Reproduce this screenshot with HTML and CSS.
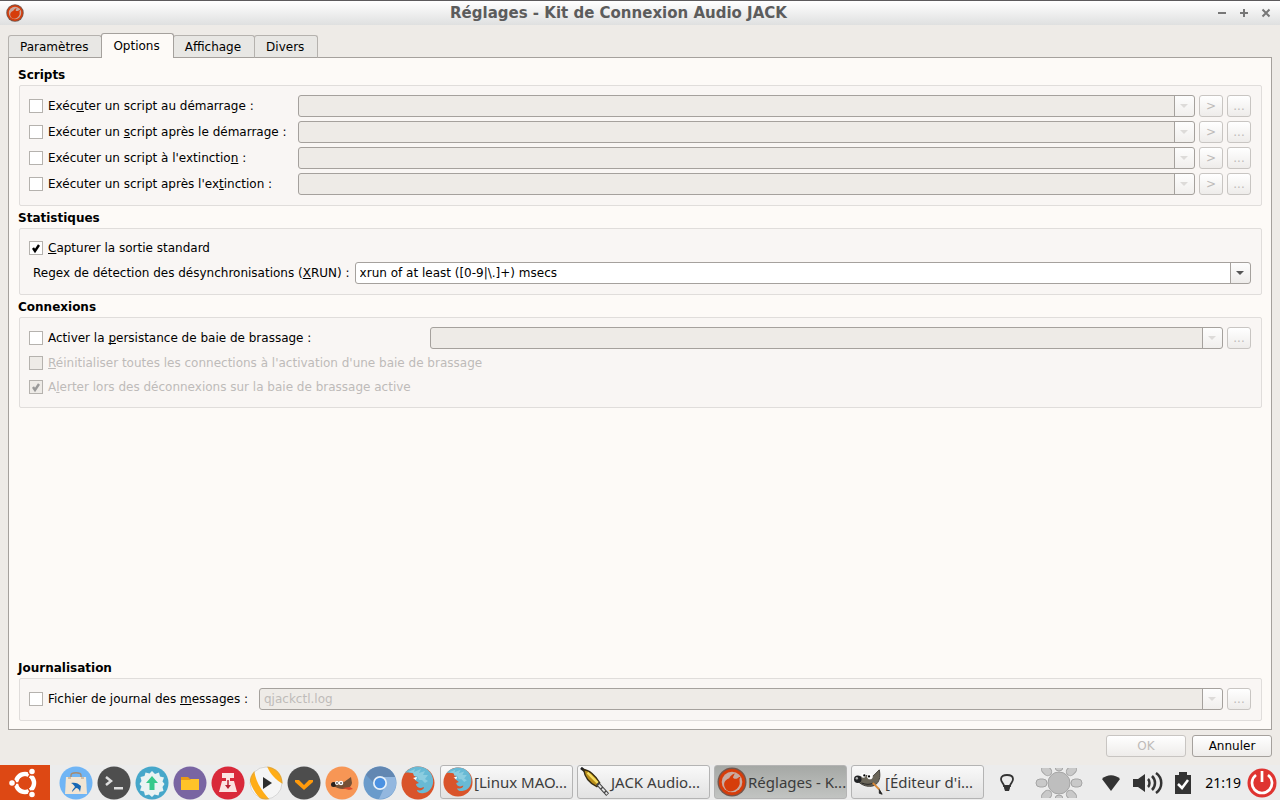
FILE: index.html
```html
<!DOCTYPE html>
<html lang="fr">

<head>
  <meta charset="UTF-8">
  <title>Réglages - Kit de Connexion Audio JACK</title>
  <link rel="stylesheet" href="styles.css">
</head>

<body>
  <!-- icônes partagées -->
  <svg class="defs" width="0" height="0">
    <defs>
      <clipPath id="disc"><circle cx="17" cy="17" r="16.500"/></clipPath>
      <symbol id="jack" viewBox="0 0 32 32">
        <circle cx="16" cy="16" r="15.500" fill="#75564c"/>
        <circle cx="16" cy="16" r="14" fill="#d63d0b"/>
        <circle cx="16" cy="16" r="11" fill="#c9aaa0"/>
        <path d="M9 23c-3-5-1-9 4-11 1-2 3-4 6-5l-2 4c1 2 3 2 5 1 1-1 2-2 3-1-2 2 0 5-1 8-2 5-6 7-10 7-2 0-4-1-5-3z" fill="#d63d0b"/>
      </symbol>
      <symbol id="firefox" viewBox="0 0 34 34">
        <circle cx="17" cy="17" r="16.500" fill="#d9542b"/>
        <path d="M4 7C7 3 12 .5 17 .5 25 .5 31 6 32 13c1 7-3 13-9 14-4 1-7-1-7-3 3 1 7 0 7-3l-3 1c-3 0-5-2-5-4l3-1-4-3c-1-2 0-4 2-5-3-2-8-3-12-2z" fill="#68bad5"/>
        <path d="M7 6l7-3-1 3 7-3-2 4 6-2-2 4 5 0-3 4 3 2-3 2-3-3-3 0-2-4-3 0-1-3z" fill="#8ccde0"/>
        <path d="M12 12l4-1-1 3z" fill="#fff"/>
      </symbol>
    </defs>
  </svg>

  <header class="titlebar">
    <svg class="app-icon" viewBox="0 0 32 32"><use href="#jack"/></svg>
    <h1>Réglages - Kit de Connexion Audio JACK</h1>
    <div class="win-buttons">
      <button type="button" aria-label="Réduire"><svg viewBox="0 0 10 10"><path d="M1 5h8"/></svg></button>
      <button type="button" aria-label="Agrandir"><svg viewBox="0 0 10 10"><path d="M1 5h8M5 1v8"/></svg></button>
      <button type="button" aria-label="Fermer"><svg viewBox="0 0 10 10"><path d="M1.500 1.500l7 7M8.500 1.500l-7 7"/></svg></button>
    </div>
  </header>

  <main class="window">
    <div class="tabs" role="tablist">
      <button type="button" role="tab">Paramètres</button>
      <button type="button" role="tab" class="active" aria-selected="true">Options</button>
      <button type="button" role="tab">Affichage</button>
      <button type="button" role="tab">Divers</button>
    </div>

    <form class="pane" id="options">
      <section>
        <h2>Scripts</h2>
        <div class="group scripts">
          <div class="row">
            <label class="check"><input type="checkbox"><span>Exéc<u>u</u>ter un script au démarrage :</span></label>
            <select class="combo" aria-label="Script au démarrage" disabled><option></option></select>
            <button type="button" class="tool" disabled>&gt;</button>
            <button type="button" class="tool" disabled>...</button>
          </div>
          <div class="row">
            <label class="check"><input type="checkbox"><span>Exécuter un <u>s</u>cript après le démarrage :</span></label>
            <select class="combo" aria-label="Script après le démarrage" disabled><option></option></select>
            <button type="button" class="tool" disabled>&gt;</button>
            <button type="button" class="tool" disabled>...</button>
          </div>
          <div class="row">
            <label class="check"><input type="checkbox"><span>Exécuter un script à l'extinctio<u>n</u> :</span></label>
            <select class="combo" aria-label="Script à l'extinction" disabled><option></option></select>
            <button type="button" class="tool" disabled>&gt;</button>
            <button type="button" class="tool" disabled>...</button>
          </div>
          <div class="row">
            <label class="check"><input type="checkbox"><span>Exécuter un script après l'ex<u>t</u>inction :</span></label>
            <select class="combo" aria-label="Script après l'extinction" disabled><option></option></select>
            <button type="button" class="tool" disabled>&gt;</button>
            <button type="button" class="tool" disabled>...</button>
          </div>
        </div>
      </section>

      <section>
        <h2>Statistiques</h2>
        <div class="group stats">
          <label class="check"><input type="checkbox" checked><span><u>C</u>apturer la sortie standard</span></label>
          <div class="row">
            <label class="regex" for="xrun">Regex de détection des désynchronisations (<u>X</u>RUN) :</label>
            <select class="combo" id="xrun"><option>xrun of at least ([0-9|\.]+) msecs</option></select>
          </div>
        </div>
      </section>

      <section>
        <h2>Connexions</h2>
        <div class="group connections">
          <div class="row">
            <label class="check"><input type="checkbox"><span>Activer la <u>p</u>ersistance de baie de brassage :</span></label>
            <select class="combo" aria-label="Baie de brassage" disabled><option></option></select>
            <button type="button" class="tool" disabled>...</button>
          </div>
          <label class="check off"><input type="checkbox" disabled><span><u>R</u>éinitialiser toutes les connections à l'activation d'une baie de brassage</span></label>
          <label class="check off"><input type="checkbox" checked disabled><span>A<u>l</u>erter lors des déconnexions sur la baie de brassage active</span></label>
        </div>
      </section>

      <section class="bottom">
        <h2>Journalisation</h2>
        <div class="group log">
          <div class="row">
            <label class="check"><input type="checkbox"><span>Fichier de journal des <u>m</u>essages :</span></label>
            <select class="combo" aria-label="Fichier de journal" disabled><option>qjackctl.log</option></select>
            <button type="button" class="tool" disabled>...</button>
          </div>
        </div>
      </section>
    </form>

    <div class="actions">
      <button type="submit" form="options" disabled>OK</button>
      <button type="button">Annuler</button>
    </div>
  </main>

  <footer class="taskbar">
    <button type="button" class="start" aria-label="Menu">
      <svg viewBox="0 0 50 35">
        <circle cx="25" cy="18" r="9" fill="none" stroke="#fff" stroke-width="4.500"/>
        <path d="M25 18L10 18M25 18L32.500 5M25 18L32.500 31" stroke="#dd4814" stroke-width="1.500"/>
        <circle cx="25" cy="18" r="6.500" fill="#dd4814"/>
        <g fill="#fff" stroke="#dd4814" stroke-width="1.500">
          <circle cx="12" cy="18" r="3.500"/><circle cx="32" cy="6.500" r="3.500"/><circle cx="32" cy="29.500" r="3.500"/>
        </g>
      </svg>
    </button>

    <nav class="launchers">
      <button type="button" aria-label="Logiciels">
        <svg viewBox="0 0 34 34"><circle cx="17" cy="17" r="16.500" fill="#70b5f5"/>
          <path d="M12 13V9c0-3 10-3 10 0v4" fill="none" stroke="#a58a70" stroke-width="1.300"/>
          <path d="M7 11h20l1 17H6z" fill="#f1e5d4"/><path d="M9 11h3v2H9zM22 11h3v2h-3z" fill="#d1bda4"/>
          <path d="M12 17c4-1 7 0 10 3l-1 6c-1-3-2-4-4-4l-4 4c0-2 2-4 3-5-1-2-2-3-4-4z" fill="#1767b4"/></svg>
      </button>
      <button type="button" aria-label="Terminal">
        <svg viewBox="0 0 34 34"><circle cx="17" cy="17" r="16.500" fill="#4e4e4e"/>
          <path d="M9 11l5 4-5 4" fill="none" stroke="#dedede" stroke-width="2.500"/><path d="M17 21h9v2.500h-9z" fill="#dedede"/></svg>
      </button>
      <button type="button" aria-label="Mises à jour">
        <svg viewBox="0 0 34 34"><circle cx="17" cy="17" r="16.500" fill="#46a7ca"/>
          <path d="M17 5l3 3 4-1.500 1 4 4 1-1.500 4 2 2.500-2 3 1 4-4 1-1 3.500-4-1-2.500 2.500-3-2.500-4 1-1-4-4-1 1.500-4-2-2.500 2-3-1-4 4-1 1-3.500 4 1z" fill="#eaf3f3"/>
          <path d="M17 10l6 7h-3.500v7h-5v-7H11z" fill="#36c98b"/></svg>
      </button>
      <button type="button" aria-label="Fichiers">
        <svg viewBox="0 0 34 34"><circle cx="17" cy="17" r="16.500" fill="#7965a2"/>
          <path d="M8 11h7l2 2h9v5H8z" fill="#e99a16"/><path d="M8 14h9l1-1h8v11H8z" fill="#ffc328"/></svg>
      </button>
      <button type="button" aria-label="Installation">
        <svg viewBox="0 0 34 34"><circle cx="17" cy="17" r="16.500" fill="#d9293a"/>
          <path d="M11 7h12v5H11zM15 12h4v4h-4z" fill="#fbe3e1"/><path d="M11 15h12l3 11H8z" fill="#fbe3e1"/>
          <path d="M17 14v7" stroke="#b92032" stroke-width="1.500"/><path d="M14 19h6l-3 4z" fill="#b92032"/></svg>
      </button>
      <button type="button" aria-label="Lecteur">
        <svg viewBox="0 0 34 34"><g clip-path="url(#disc)"><path d="M0 0h34v34H0z" fill="#f5f5f5"/>
          <path d="M0 0h5c0 14 7 24 16 34H13C6 28 2 20 0 12z" fill="#ffad16"/>
          <path d="M0 18c3 6 7 11 13 16H0z" fill="#fafafa"/>
          <path d="M18 0h16v18C27 14 21 8 18 0z" fill="#ffad16"/></g>
          <circle cx="17" cy="17" r="16" fill="none" stroke="#999" stroke-opacity=".35"/>
          <path d="M14 11l9 6-9 6z" fill="#2d2d2d"/></svg>
      </button>
      <button type="button" aria-label="Plex">
        <svg viewBox="0 0 34 34"><circle cx="17" cy="17" r="16.500" fill="#4d4d4d"/>
          <path d="M8 14h4l5 5 5-5h4v2l-9 8-9-8z" fill="#ff9a0b"/></svg>
      </button>
      <button type="button" aria-label="GIMP">
        <svg viewBox="0 0 34 34"><circle cx="17" cy="17" r="16.500" fill="#f79655"/>
          <path d="M8 17l7-2 4 1 7-5 1 6c-1 4-4 6-9 6-4 0-7-2-10-3z" fill="#755035"/>
          <circle cx="8.500" cy="18.500" r="2.500" fill="#28211f"/><circle cx="12" cy="17" r="2" fill="#fff"/><circle cx="16" cy="17" r="2.300" fill="#fff"/>
          <circle cx="12" cy="17" r=".8"/><circle cx="16" cy="17" r=".8"/><path d="M17 22l8-1 3 2-4 1z" fill="#dc4a2b"/></svg>
      </button>
      <button type="button" aria-label="Chromium">
        <svg viewBox="0 0 34 34"><circle cx="17" cy="17" r="16.500" fill="#6a9bcb"/>
          <path d="M3 9C10-3 27-2 32 11H17c-4 0-6 3-6 6z" fill="#6287b2"/>
          <path d="M32 11c4 11-3 22-16 22l6-13c2-3 1-7-2-9z" fill="#93b7df"/>
          <circle cx="17" cy="17" r="7" fill="#e8f1fa"/><circle cx="17" cy="17" r="5.300" fill="#4b91e2"/></svg>
      </button>
      <button type="button" aria-label="Firefox"><svg viewBox="0 0 34 34"><use href="#firefox"/></svg></button>
    </nav>

    <div class="tasks">
      <button type="button">
        <svg viewBox="0 0 34 34"><use href="#firefox"/></svg><span>[Linux MAO...</span>
      </button>
      <button type="button">
        <svg viewBox="0 0 32 32"><path d="M1 1l8 6" stroke="#222" stroke-width="3"/>
          <path d="M4 3c5 0 12 5 17 14l-3 4C10 17 5 11 4 3z" fill="#b98d18" stroke="#352b13" stroke-width="1.500"/>
          <path d="M8 6l11 11" stroke="#f5dc61" stroke-width="2.500"/>
          <path d="M17 19l3-3 11 12-3 3z" fill="#464646"/><path d="M20 19l9 10" stroke="#e5e5e5" stroke-width="2" stroke-dasharray="4 1.500"/></svg>
        <span>JACK Audio...</span>
      </button>
      <button type="button" class="current">
        <svg viewBox="0 0 32 32"><use href="#jack"/></svg><span>Réglages - K...</span>
      </button>
      <button type="button">
        <svg viewBox="0 0 32 32"><path d="M5 11l9-2 6 1 7-7c1 6 1 11-3 15-3 3-8 3-12 2-3-1-5-2-7-4z" fill="#6b6659" stroke="#3d3a34"/>
          <circle cx="4" cy="13" r="4" fill="#202224"/><circle cx="3" cy="12" r="1.300" fill="#aaa"/>
          <circle cx="10" cy="9" r="2.500" fill="#fff"/><circle cx="17" cy="10" r="3" fill="#fff"/><circle cx="11" cy="9" r="1.200"/><circle cx="16" cy="10" r="1.200"/>
          <path d="M8 17c5 2 9 2 13 0" stroke="#222" fill="none"/><path d="M20 17l7 7" stroke="#d98a38" stroke-width="2"/><path d="M27 24l3 5-3-1z" fill="#222" stroke="#222"/></svg>
        <span>[Éditeur d'i...</span>
      </button>
    </div>

    <div class="tray">
      <svg class="bulb" viewBox="0 0 16 20"><path d="M5 13c0-3-3-3-3-7 0-3 3-4 6-4s6 1 6 4c0 4-3 4-3 7z" fill="none" stroke="#333" stroke-width="1.800"/><path d="M5 12h6v3l-1 3H6l-1-3z" fill="#333"/></svg>
      <svg class="sun" viewBox="0 0 48 30">
        <g fill="#c9c9c9" stroke="#a5a5a5">
          <rect x="1" y="11" width="11" height="8" rx="4"/><rect x="36" y="11" width="11" height="8" rx="4"/>
          <rect x="20" y="-5" width="8" height="8" rx="4"/><rect x="20" y="27" width="8" height="8" rx="4"/>
          <rect x="1" y="11" width="11" height="8" rx="4" transform="rotate(45 24 15)"/><rect x="1" y="11" width="11" height="8" rx="4" transform="rotate(-45 24 15)"/>
          <rect x="36" y="11" width="11" height="8" rx="4" transform="rotate(45 24 15)"/><rect x="36" y="11" width="11" height="8" rx="4" transform="rotate(-45 24 15)"/>
          <circle cx="24" cy="15" r="11" fill="#bebebe"/>
        </g>
      </svg>
      <svg class="wifi" viewBox="0 0 20 18"><path d="M1 5c5-5 13-5 18 0l-9 12z" fill="#333"/></svg>
      <svg class="sound" viewBox="0 0 30 22"><path d="M0 7h5l7-5v18l-7-5H0z" fill="#333"/><path d="M15 7c2 2 2 6 0 8M19 4c4 4 4 10 0 14M23 1c7 5 7 15 0 20" fill="none" stroke="#333" stroke-width="2.500"/></svg>
      <svg class="battery" viewBox="0 0 16 22"><path d="M0 3h4V0h8v3h4v19H0z" fill="#333"/><path d="M3 12l4 4 6-8" fill="none" stroke="#fff" stroke-width="2.500"/></svg>
      <time>21:19</time>
      <button type="button" class="power" aria-label="Éteindre">
        <svg viewBox="0 0 30 30"><circle cx="15" cy="15" r="14.500" fill="#df3431"/><path d="M9 7a10 10 0 1 0 12 0" fill="none" stroke="#fff" stroke-width="2.700"/><path d="M15 3v11" stroke="#fff" stroke-width="2.700"/></svg>
      </button>
    </div>
  </footer>
</body>

</html>
```
FILE: styles.css
```css
* {
  box-sizing: border-box;
}

body {
  margin: 0;
  min-height: 100vh;
  display: flex;
  flex-direction: column;
  background: #eeebe7;
  color: #000;
  font: 12px/16px "DejaVu Sans", sans-serif;
}

button,
select,
input {
  margin: 0;
  font: inherit;
  color: inherit;
}

svg {
  display: block;
  flex: none;
}

u {
  text-underline-offset: 1px;
  text-decoration-skip-ink: none;
}

.defs {
  position: absolute;
}

/* barre de titre */
.titlebar {
  height: 25px;
  display: grid;
  grid-template-columns: 20px 1fr 60px;
  align-items: center;
  padding: 0 9px 0 6px;
  border-top: 1px solid #5c5a5c;
  background: linear-gradient(#fff, #dfe0e0);
}

.titlebar .app-icon {
  width: 18px;
  height: 18px;
}

.titlebar h1 {
  margin: 0;
  text-align: center;
  font: bold 15px/22px "DejaVu Sans", sans-serif;
  color: #5c5c5c;
}

.win-buttons {
  display: flex;
  justify-content: flex-end;
  gap: 12px;
}

.win-buttons button {
  padding: 0;
  border: 0;
  background: none;
}

.win-buttons svg {
  width: 10px;
  height: 10px;
  stroke: #777;
  stroke-width: 2;
}

/* fenêtre */
.window {
  flex: 1;
  display: flex;
  flex-direction: column;
  padding: 8px 8px;
}

.tabs {
  display: flex;
  align-items: flex-end;
  height: 25px;
  margin-bottom: -1px;
  z-index: 1;
}

.tabs button {
  height: 23px;
  margin-right: -1px;
  padding: 0 13px 0 11px;
  border: 1px solid #b5b2ae;
  border-bottom-color: #a5a19d;
  border-radius: 3px 3px 0 0;
  background: #e8e7e4;
}

.tabs .active {
  height: 25px;
  padding-bottom: 1px;
  border-color: #a5a19d;
  border-bottom: 0;
  background: #fdfaf7;
  z-index: 1;
}

.pane {
  flex: 1;
  display: flex;
  flex-direction: column;
  padding: 5px 9px 8px 10px;
  border: 1px solid #a5a19d;
  background: #fdfaf7;
}

.pane h2 {
  margin: 0 0 0 -1px;
  padding-top: 2px;
  font-size: 12px;
  line-height: 20px;
}

.pane .bottom {
  margin-top: auto;
}

.group {
  display: flex;
  flex-direction: column;
  gap: 4px;
  padding: 9px 10px 10px 9px;
  border: 1px solid #e0dddb;
  border-radius: 2px;
  background: #f9f6f4;
}

.row {
  display: flex;
  gap: 4px;
}

.check {
  display: flex;
  align-items: center;
  gap: 5px;
  min-height: 20px;
}

.check input {
  appearance: none;
  width: 14px;
  height: 14px;
  border: 1px solid #b5b2ae;
  background: #fff;
}

.check input:checked {
  background: #fff url("data:image/svg+xml,%3Csvg xmlns='http://www.w3.org/2000/svg' viewBox='0 0 12 12'%3E%3Cpath d='M3 6l2 3 4-6' fill='none' stroke='%23000' stroke-width='2.4'/%3E%3C/svg%3E");
}

.check input:disabled {
  background-color: #eeebe7;
}

.check input:disabled:checked {
  background-image: url("data:image/svg+xml,%3Csvg xmlns='http://www.w3.org/2000/svg' viewBox='0 0 12 12'%3E%3Cpath d='M3 6l2 3 4-6' fill='none' stroke='%23999' stroke-width='2.4'/%3E%3C/svg%3E");
}

.off {
  color: #bebbb9;
}

.scripts .check {
  width: 265px;
}

.connections .row .check {
  width: 397px;
}

.log .check {
  width: 226px;
}

.regex {
  padding: 0 1px 0 4px;
  line-height: 22px;
}

.combo {
  appearance: none;
  flex: 1;
  min-width: 0;
  height: 22px;
  padding: 0 24px 0 4px;
  border: 1px solid #a5a19d;
  border-radius: 3px;
  background:
    url("data:image/svg+xml,%3Csvg xmlns='http://www.w3.org/2000/svg' viewBox='0 0 8 4'%3E%3Cpath d='M0 0h8L4 4z' fill='%23555'/%3E%3C/svg%3E") right 6px center / 8px 4px no-repeat,
    linear-gradient(#a5a19d, #a5a19d) right 19px top / 1px 100% no-repeat,
    linear-gradient(#fdfdfd, #eeecea) right top / 19px 100% no-repeat,
    #fff;
}

.combo:disabled {
  opacity: 1;
  color: #bebbb9;
  background:
    url("data:image/svg+xml,%3Csvg xmlns='http://www.w3.org/2000/svg' viewBox='0 0 8 4'%3E%3Cpath d='M0 0h8L4 4z' fill='%23dddbd9'/%3E%3C/svg%3E") right 6px center / 8px 4px no-repeat,
    linear-gradient(#a5a19d, #a5a19d) right 19px top / 1px 100% no-repeat,
    linear-gradient(#fdfdfd, #f1efed) right top / 19px 100% no-repeat,
    #eeebe7;
}

.tool,
.actions button {
  height: 22px;
  padding: 0;
  border: 1px solid #a5a19d;
  border-radius: 3px;
  background: linear-gradient(#fff, #eeecea);
}

.tool {
  width: 24px;
}

.tool:disabled,
.actions button:disabled {
  border-color: #c8c5c2;
  color: #bebbb9;
}

.actions {
  display: flex;
  justify-content: flex-end;
  gap: 6px;
  padding-top: 5px;
}

.actions button {
  width: 80px;
}

/* barre des tâches */
.taskbar {
  height: 35px;
  display: flex;
  background: #ececec;
  font: 15px/20px "Noto Sans", sans-serif;
}

.taskbar button {
  padding: 0;
  border: 0;
  background: none;
}

.taskbar .start {
  width: 50px;
  background: #dd4814;
}

.launchers {
  display: flex;
  gap: 4px;
  padding: 0 5px 0 9px;
}

.launchers svg {
  width: 34px;
  height: 34px;
}

.tasks {
  flex: 1;
  display: flex;
  gap: 4px;
}

.taskbar .tasks button {
  flex: 0 1 133px;
  min-width: 0;
  height: 34px;
  display: flex;
  align-items: center;
  gap: 1px;
  padding: 0 2px;
  border: 1px solid #b4b4b4;
  border-radius: 3px;
  background: linear-gradient(#f9f9f9, #e2e2e2);
  color: #3c3c3c;
  white-space: nowrap;
}

.taskbar .tasks .current {
  background: linear-gradient(#a5a8a5, #c2c4c2);
}

.tasks svg {
  width: 30px;
  height: 30px;
}

.tray {
  display: flex;
  align-items: center;
  gap: 12px;
  padding-right: 3px;
}

.bulb {
  width: 16px;
  height: 20px;
}

.sun {
  width: 48px;
  height: 30px;
  margin: 0 6px 0 8px;
}

.wifi {
  width: 20px;
  height: 18px;
}

.sound {
  width: 30px;
  height: 22px;
}

.battery {
  width: 16px;
  height: 22px;
}

.tray time {
  margin-left: 2px;
  font-size: 14px;
  color: #000;
}

.power svg {
  width: 30px;
  height: 30px;
}

.tray .power {
  margin-left: -6px;
}
```
